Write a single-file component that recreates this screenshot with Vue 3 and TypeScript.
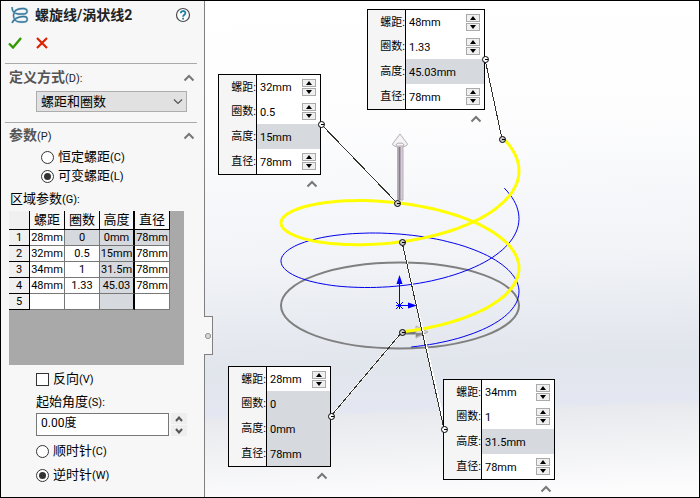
<script setup lang="ts">
import { reactive, ref } from 'vue'

interface Station { turns: number; pitch: number }
interface Field { label: string; value: string; locked: boolean }
interface Callout { id: string; className: string; fields: Field[] }
interface Region { pitch: string; turns: string; height: string; diameter: string }

const method = ref('pitch-revolution')
const pitchType = ref('variable')
const reverse = ref(false)
const startAngle = ref('0.00度')
const direction = ref('ccw')

const regions: Region[] = [
  { pitch: '28mm', turns: '0', height: '0mm', diameter: '78mm' },
  { pitch: '32mm', turns: '0.5', height: '15mm', diameter: '78mm' },
  { pitch: '34mm', turns: '1', height: '31.5m', diameter: '78mm' },
  { pitch: '48mm', turns: '1.33', height: '45.03', diameter: '78mm' },
  { pitch: '', turns: '', height: '', diameter: '' },
]

const labels = ['螺距', '圈数', '高度', '直径']

function makeCallout(id: string, className: string, values: string[], locked: number[]): Callout {
  return {
    id,
    className,
    fields: labels.map((label, i) => ({ label, value: values[i], locked: locked.includes(i) })),
  }
}

const callouts = reactive<Callout[]>([
  makeCallout('p2', 'at-half', ['32mm', '0.5', '15mm', '78mm'], [2]),
  makeCallout('p4', 'at-end', ['48mm', '1.33', '45.03mm', '78mm'], [2]),
  makeCallout('p1', 'at-start', ['28mm', '0', '0mm', '78mm'], [1, 2, 3]),
  makeCallout('p3', 'at-full', ['34mm', '1', '31.5mm', '78mm'], [2]),
])

function step(field: Field, amount: number) {
  const unit = field.value.replace(/^[-\d.]+/, '')
  const next = (parseFloat(field.value) || 0) + amount
  field.value = `${Number(next.toFixed(2))}${unit}`
}

function stepAngle(amount: number) {
  startAngle.value = `${((parseFloat(startAngle.value) || 0) + amount).toFixed(2)}度`
}

// Height rises as the integral of a pitch that is linear between stations.
function heightAt(turns: number, stations: Station[]): number {
  let height = 0
  for (let i = 1; i < stations.length; i++) {
    const a = stations[i - 1]
    const b = stations[i]
    const span = b.turns - a.turns
    const t = Math.min(turns - a.turns, span)
    if (t <= 0) break
    height += a.pitch * t + ((b.pitch - a.pitch) * t * t) / (2 * span)
  }
  return height
}

function helix(cy: number, start: number, stations: Station[]): string {
  const end = stations[stations.length - 1].turns
  const points: string[] = []
  for (let i = 0; i <= 160; i++) {
    const turns = start + ((end - start) * i) / 160
    const angle = turns * Math.PI * 2
    const x = 400 + 119 * Math.sin(angle)
    const y = cy + 43 * Math.cos(angle) - 2.86 * heightAt(turns, stations)
    points.push(`${x.toFixed(1)},${y.toFixed(1)}`)
  }
  return points.join(' ')
}

const previewPath = helix(289, 0, [
  { turns: 0, pitch: 28 },
  { turns: 0.5, pitch: 32 },
  { turns: 1, pitch: 34 },
  { turns: 1.33, pitch: 48 },
])
const currentPath = helix(305, 0.015, [
  { turns: 0, pitch: 18 },
  { turns: 0.5, pitch: 21 },
  { turns: 1, pitch: 27 },
  { turns: 1.33, pitch: 45 },
])

const grips = [
  [502, 139], [397, 203], [402, 242], [402, 332],
  [485, 59], [321, 124], [331, 416], [444, 429],
]
</script>

<template>
  <main class="app">
    <aside class="panel">
      <header class="title">
        <svg class="helix-icon" viewBox="0 0 18 18" width="18" height="18" aria-hidden="true">
          <g fill="none">
            <path d="M1 1c0 4 2 6.500 6 7h5c5.500 0 5.500-5.500 0-5.500C6 2.500 2.500 5 2.500 9.500c0 4 3 6.500 7 6.500h3c5 0 5-5.500 0-5.500C7 10.500 3 13 1 17" stroke="#c3d8e2" stroke-width="2.500" />
            <path d="M1 1c0 4 2 6.500 6 7h5c5.500 0 5.500-5.500 0-5.500C6 2.500 2.500 5 2.500 9.500c0 4 3 6.500 7 6.500h3c5 0 5-5.500 0-5.500C7 10.500 3 13 1 17" stroke="#35769a" stroke-width="1.300" />
          </g>
        </svg>
        <h1>螺旋线/涡状线2</h1>
        <button class="plain help" type="button" aria-label="帮助">
          <svg viewBox="0 0 16 16" width="16" height="16">
            <circle cx="8" cy="8" r="6.500" fill="#fff" stroke="#4a4a4a" stroke-width="1.200" />
            <path d="M5.800 6.300c0-3 4.600-3 4.600-.2 0 1.700-2.300 1.700-2.300 3.600" fill="none" stroke="#1f7fa8" stroke-width="1.800" />
            <path d="M7.200 10.800h1.800v1.600H7.200z" fill="#1f7fa8" />
          </svg>
        </button>
      </header>
      <div class="actions">
        <button class="plain" type="button" aria-label="确定">
          <svg viewBox="0 0 14 12" width="14" height="12"><path d="M1 6.500l4 4L13 1" fill="none" stroke="#339900" stroke-width="2.400" /></svg>
        </button>
        <button class="plain" type="button" aria-label="取消">
          <svg viewBox="0 0 12 12" width="12" height="12"><path d="M1 1l10 10M11 1L1 11" fill="none" stroke="#dd2200" stroke-width="2.200" /></svg>
        </button>
      </div>

      <section class="group definition">
        <h2><label for="method">定义方式<small>(D):</small></label>
          <svg class="caret" viewBox="0 0 12 8" width="12" height="8"><path d="M1.500 6.500L6 2l4.500 4.500" /></svg>
        </h2>
        <div class="select-wrap">
          <select id="method" v-model="method">
            <option value="pitch-revolution">螺距和圈数</option>
          </select>
          <svg viewBox="0 0 10 6" width="10" height="6"><path d="M1 .5l4 4 4-4" fill="none" stroke="#555" stroke-width="1.200" /></svg>
        </div>
      </section>

      <section class="group parameters">
        <h2><span>参数<small>(P)</small></span>
          <svg class="caret" viewBox="0 0 12 8" width="12" height="8"><path d="M1.500 6.500L6 2l4.500 4.500" /></svg>
        </h2>
        <div class="pitch-types">
          <label class="choice"><input v-model="pitchType" type="radio" name="pitch" value="constant" /><span>恒定螺距<small>(C)</small></span></label>
          <label class="choice"><input v-model="pitchType" type="radio" name="pitch" value="variable" /><span>可变螺距<small>(L)</small></span></label>
        </div>
        <div id="region-title" class="region-title">区域参数<small>(G):</small></div>
        <div class="grid-area">
          <table aria-labelledby="region-title">
            <thead>
              <tr><th></th><th v-for="name in labels" :key="name" scope="col">{{ name }}</th></tr>
            </thead>
            <tbody>
              <tr v-for="(row, i) in regions" :key="i" :class="{ first: i === 0 }">
                <th scope="row">{{ i + 1 }}</th>
                <td>{{ row.pitch }}</td>
                <td>{{ row.turns }}</td>
                <td>{{ row.height }}</td>
                <td>{{ row.diameter }}</td>
              </tr>
            </tbody>
          </table>
        </div>
        <div class="options">
          <label class="choice"><input v-model="reverse" type="checkbox" /><span>反向<small>(V)</small></span></label>
          <label class="angle-label" for="angle">起始角度<small>(S):</small></label>
          <div class="angle">
            <input id="angle" v-model="startAngle" type="text" />
            <div class="angle-steps">
              <button type="button" aria-label="增大角度" @click="stepAngle(1)"><svg viewBox="0 0 8 6" width="8" height="6"><path d="M1 5l3-3.500L7 5" /></svg></button>
              <button type="button" aria-label="减小角度" @click="stepAngle(-1)"><svg viewBox="0 0 8 6" width="8" height="6"><path d="M1 1l3 3.500L7 1" /></svg></button>
            </div>
          </div>
          <label class="choice"><input v-model="direction" type="radio" name="direction" value="cw" /><span>顺时针<small>(C)</small></span></label>
          <label class="choice"><input v-model="direction" type="radio" name="direction" value="ccw" /><span>逆时针<small>(W)</small></span></label>
        </div>
      </section>
      <button class="splitter" type="button" aria-label="折叠面板"><span></span></button>
    </aside>

    <section class="viewport" aria-label="图形区域">
      <svg class="scene" viewBox="205 1 494 496" width="494" height="496" aria-hidden="true">
        <ellipse cx="400" cy="305.500" rx="119" ry="43" fill="none" stroke="#808080" stroke-width="2" />
        <g stroke="#b5afb7" fill="#f5f5f5">
          <path d="M400 134l-7.500 10c0 4 15 4 15 0z" />
          <ellipse cx="400" cy="145" rx="4" ry="2" />
          <path d="M397.500 146h5.500v54h-5.500z" fill="#d8ccd9" />
          <path d="M399.500 147v53" stroke="#858087" stroke-width="2" />
        </g>
        <path d="M404 333h12" stroke="#777" stroke-width="3" />
        <path d="M416 326l12 6-12 6z" fill="#ddd8da" stroke="#b3aeb0" />
        <path d="M416 333h10l-10 4z" fill="#888" />
        <polyline :points="currentPath" fill="none" stroke="#0000ee" />
        <g stroke="#0000ff" fill="#0000ff">
          <path d="M399.500 305.500v-24M399.500 305.500h12M396 302l7 7M403 302l-7 7M396 305.500h7M399.500 302v7" />
          <path d="M399.500 275l3 9h-6zM417 305.500l-9-3v6z" stroke="none" />
        </g>
        <polyline :points="previewPath" fill="none" stroke="#ffff00" stroke-width="3" />
        <g fill="none" shape-rendering="crispEdges">
          <path d="M402 242l41 176M331 416l71-84M321 124l76 79M485 59l17 80" stroke="#fff" stroke-width="2" />
          <path d="M402 242l42 187M331 416l71-84M321 124l76 79M485 59l17 80" stroke="#33332b" />
        </g>
      </svg>

      <form v-for="box in callouts" :key="box.id" class="callout" :class="box.className" @submit.prevent>
        <div class="callout-box">
          <div v-for="(field, i) in box.fields" :key="field.label" class="field" :class="{ locked: field.locked }">
            <label :for="`${box.id}-${i}`">{{ field.label }}:</label>
            <div class="field-value">
              <input :id="`${box.id}-${i}`" v-model="field.value" type="text" :readonly="field.locked" />
              <div v-if="!field.locked" class="steps">
                <button type="button" aria-label="增大" @click="step(field, 1)"><svg viewBox="0 0 6 4" width="6" height="4"><path d="M3 0l3 4H0z" /></svg></button>
                <button type="button" aria-label="减小" @click="step(field, -1)"><svg viewBox="0 0 6 4" width="6" height="4"><path d="M3 4l3-4H0z" /></svg></button>
              </div>
            </div>
          </div>
        </div>
        <svg class="caret" viewBox="0 0 12 8" width="12" height="8"><path d="M1.500 6.500L6 2l4.500 4.500" /></svg>
      </form>

      <svg class="scene grips" viewBox="205 1 494 496" width="494" height="496" aria-hidden="true">
        <g v-for="([x, y], i) in grips" :key="i" stroke="#000" :fill="i < 4 ? '#c8c8c8' : '#fff'">
          <circle :cx="x + 0.5" :cy="y + 0.5" r="3" />
          <path :d="`M${x} ${y + 0.5}h3`" />
        </g>
      </svg>
    </section>
  </main>
</template>

<style>
body {
  overflow: hidden;
}
</style>

<style scoped>
.app,
.app * {
  box-sizing: border-box;
}

.app {
  display: flex;
  min-height: 100vh;
  border: 1px solid #000;
  font-family: Roboto, "Noto Sans CJK SC", sans-serif;
  font-size: 13px;
  line-height: 18px;
  color: #000;
}

small {
  font-size: 11px;
  font-weight: 400;
}

button,
input,
select {
  margin: 0;
  padding: 0;
  font: inherit;
  color: inherit;
}

button {
  display: flex;
  align-items: center;
  justify-content: center;
}

svg {
  display: block;
  flex: none;
}

.plain {
  border: 0;
  background: none;
}

.panel {
  position: relative;
  flex: none;
  width: 204px;
  padding: 3px 7px 0 4px;
  border-right: 1px solid #808080;
  background: #f7f7f7;
}

.title {
  display: flex;
  align-items: center;
  height: 22px;
  padding: 0 6px;
}

.title h1 {
  flex: 1;
  margin: 0 0 0 6px;
  font-size: 14px;
  line-height: 20px;
  font-weight: 700;
  color: #222;
}

.actions {
  display: flex;
  align-items: center;
  gap: 14px;
  height: 37px;
  padding: 0 3px 4px;
}

.group {
  border-top: 1px solid #aaa;
}

.group h2 {
  display: flex;
  align-items: center;
  justify-content: space-between;
  margin: 0;
  padding: 0 2px 0 4px;
  height: 27px;
  font-size: 14px;
  font-weight: 700;
  color: #555;
}

.group h2 small {
  color: #222;
}

.caret path {
  fill: none;
  stroke: #777;
  stroke-width: 2;
}

.definition {
  height: 59px;
}

.select-wrap {
  display: grid;
  align-items: center;
  margin: 0 10px 0 31px;
}

.select-wrap > * {
  grid-area: 1 / 1;
}

.select-wrap svg {
  justify-self: end;
  margin-right: 4px;
  pointer-events: none;
}

select {
  appearance: none;
  height: 21px;
  padding: 0 16px 0 4px;
  border: 1px solid #adadad;
  border-radius: 0;
  background: #e1e1e1;
}

.parameters h2 {
  height: 25px;
}

.pitch-types {
  padding-left: 36px;
}

.choice {
  display: flex;
  align-items: center;
  gap: 4px;
  height: 19px;
}

.choice input {
  appearance: none;
  display: grid;
  place-items: center;
  flex: none;
  width: 13px;
  height: 13px;
  border: 1px solid #333;
  background: #fff;
}

.choice input[type="radio"] {
  border-radius: 50%;
}

.choice input:checked::before {
  content: "";
  width: 7px;
  height: 7px;
  border-radius: 50%;
  background: #333;
}

.choice input[type="checkbox"]:checked::before {
  border-radius: 0;
}

.region-title {
  height: 25px;
  padding: 4px 0 0 5px;
}

.grid-area {
  height: 154px;
  margin: 0 13px 0 4px;
  background: #a9a9a9;
}

table {
  width: 161px;
  table-layout: fixed;
  border-collapse: separate;
  border-spacing: 0;
}

th,
td {
  height: 16px;
  padding: 0;
  border-right: 1px solid #777;
  border-bottom: 1px solid #777;
  background: #fff;
  font-size: 11px;
  font-weight: 400;
  line-height: 15px;
  text-align: center;
  white-space: nowrap;
}

thead th {
  height: 19px;
  border-right-color: #000;
  border-bottom-color: #000;
  background: #f7f7f7;
  font-size: 13px;
  line-height: 16px;
}

th:first-child {
  width: 21px;
  border-color: #000;
  background: #f0f0f0;
}

td:nth-child(4),
thead th:nth-child(4) {
  border-right: 2px solid #000;
}

.first td:nth-child(3),
td:nth-child(4),
.first td:nth-child(5) {
  background: #d6d9de;
}

.options {
  padding: 5px 0 0 31px;
}

.angle-label {
  display: block;
  height: 24px;
  padding-top: 4px;
}

.angle {
  display: flex;
  gap: 2px;
  height: 23px;
  margin: 0 10px 3px 0;
}

.angle input {
  flex: 1;
  min-width: 0;
  padding: 0 4px 4px;
  border: 1px solid #777;
  background: #fff;
  font-size: 12px;
}

.angle-steps {
  display: grid;
  grid-template-rows: 1fr 1fr;
  gap: 1px;
  width: 16px;
}

.angle-steps button {
  border: 0;
  background: #eee;
}

.angle-steps path {
  fill: none;
  stroke: #555;
  stroke-width: 2;
}

.angle ~ .choice {
  height: 24px;
}

.splitter {
  position: absolute;
  z-index: 1;
  top: 315px;
  right: -9px;
  width: 9px;
  height: 39px;
  border: 1px solid #808080;
  border-left: 0;
  background: #f7f7f7;
}

.splitter span {
  width: 6px;
  height: 6px;
  border: 1px solid #888;
  border-radius: 50%;
  background: #ddd;
}

.viewport {
  position: relative;
  flex: 1;
  min-width: 0;
  overflow: hidden;
  background: linear-gradient(178deg, #fff 0%, #fdfdfe 25%, #f1f3f7 52%, #e1e5ec 72%, #e4e7f1 81%, #e9eaee 82%, #fcfcfd 98%);
}

.scene {
  position: absolute;
  inset: 0 auto auto 0;
}

.grips {
  pointer-events: none;
}

.callout {
  position: absolute;
  width: 103px;
}

.at-half {
  left: 13px;
  top: 73px;
}

.at-end {
  left: 162px;
  top: 8px;
  width: 118px;
}

.at-start {
  left: 23px;
  top: 365px;
}

.at-full {
  left: 238px;
  top: 378px;
  width: 112px;
}

.callout .caret {
  margin: 5px 3px 0 auto;
}

.callout-box {
  border: 1px solid #000;
  background: #fff;
}

.field {
  display: grid;
  grid-template-columns: 38px 1fr;
  height: 25px;
}

.field:first-child {
  height: 24px;
}

.field label {
  padding-top: 1px;
  border-right: 1px solid #000;
  background: #f5f5f5;
  font-size: 11px;
  line-height: 24px;
  text-align: right;
  white-space: nowrap;
}

.field:first-child label {
  line-height: 23px;
}

.field-value {
  display: flex;
  align-items: center;
  min-width: 0;
  padding: 0 4px 0 3px;
}

.field-value input {
  flex: 1;
  min-width: 0;
  padding-top: 2px;
  border: 0;
  outline: 0;
  background: transparent;
  font-size: 11px;
}

.locked .field-value {
  background: #d6d9de;
}

.steps {
  display: grid;
  grid-template-rows: 8px 8px;
  gap: 1px;
  width: 14px;
}

.steps button {
  border: 1px solid #aaa;
  background: #f0f0f0;
}
</style>
